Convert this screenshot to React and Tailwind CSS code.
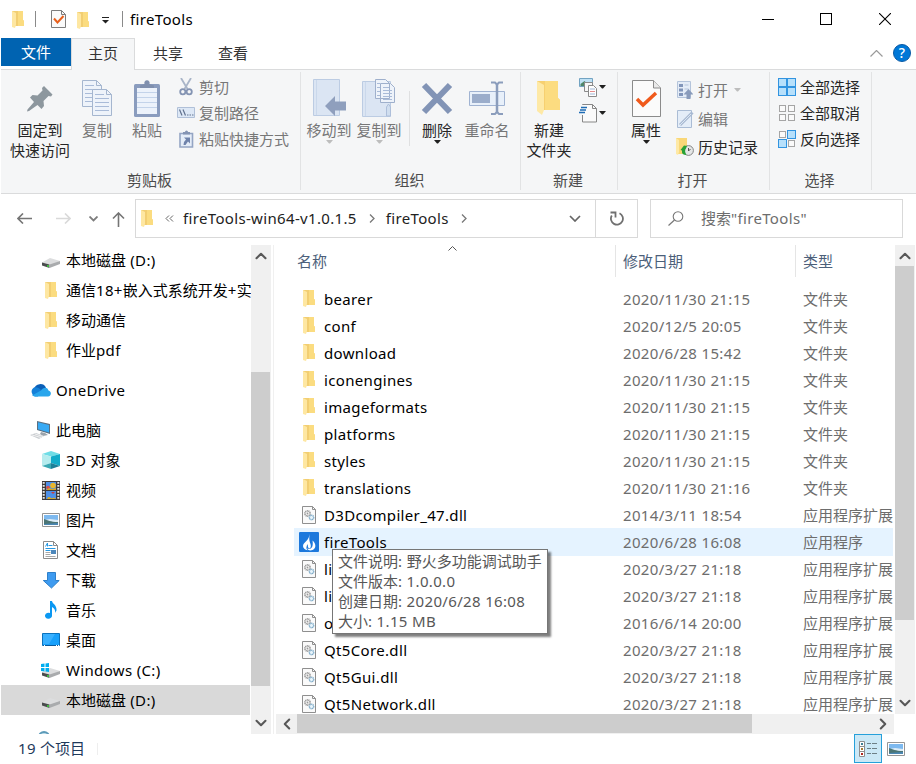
import { ChevronDown, ChevronLeft, ChevronRight, ChevronUp } from "lucide-react";

// latin runs are spaced a little wider than the chinese ones
const Text = ({ children, className = "" }) => (
  <span className={`whitespace-pre ${className}`}>
    {children.split(/([\x20-\x7e]+)/).map((part, i) =>
      i % 2 ? (
        <span key={i} className="tracking-[0.34px]">
          {part}
        </span>
      ) : (
        part
      )
    )}
  </span>
);

const Svg = ({ w, h, children, className = "" }) => (
  <svg width={w} height={h} viewBox={`0 0 ${w} ${h}`} fill="none" className={`shrink-0 ${className}`}>
    {children}
  </svg>
);

const FolderIcon = () => (
  <Svg w={12} h={17}>
    <path d="M0 0h11v9l1 1v5H0z" fill="#f2ce72" />
    <path d="M6 0h5v9l1 1v5H6z" fill="#fbdc80" />
    <path d="M0 0l4 2v12l-1 3-3-1z" fill="#fee7a2" />
  </Svg>
);

const CheckDocIcon = () => (
  <Svg w={15} h={18}>
    <path d="M.5.5h10l4 4v13H.5z" fill="#fafafa" stroke="#7d7d7d" />
    <path d="M10.500.5v4h4" stroke="#7d7d7d" />
    <path d="M3 8.500l3.500 4L12.500 6" stroke="#e8601c" strokeWidth="2" />
  </Svg>
);

const BigFolderIcon = () => (
  <Svg w={26} h={36}>
    <path d="M1 1h21v17l2 2v10H1z" fill="#f7d070" />
    <path d="M9 1h13v17l2 2v10H9z" fill="#fcdc80" />
    <path d="M1 1l7 4v25l-2 5-5-4z" fill="#fee9a6" />
  </Svg>
);

const PinIcon = () => (
  <Svg w={26} h={27}>
    <path d="M17 1l8.500 8.500-1.500 2-2.500-.5-5 5 .5 5-2.500 3-4-4L2 26l-2 .5.5-2 6.500-7.500-4-4.500L5.500 10l5 .5 5-5L15 3z" fill="#8d979e" />
  </Svg>
);

const Sheet = ({ x, y }) => (
  <g transform={`translate(${x} ${y})`}>
    <path d="M.5.5h14l5 5v21H.5z" fill="#eef3fa" stroke="#a5b6cf" />
    <path d="M14.500.5v5h5" stroke="#a5b6cf" />
    <path d="M3 5.500h9M3 9.500h14M3 13.500h14M3 17.500h14M3 21.500h14" stroke="#a9bbd8" />
  </g>
);

const CopyIcon = () => (
  <Svg w={31} h={37}>
    <Sheet x={0} y={0} />
    <Sheet x={10} y={9} />
  </Svg>
);

const PasteIcon = () => (
  <Svg w={26} h={37}>
    <rect x="0" y="4" width="26" height="33" rx="1.500" fill="#8a9cbe" />
    <path d="M3 8h20v26H3z" fill="#ecf2fb" />
    <path d="M3 12.500h20M3 17.500h20M3 22.500h20M3 27.500h20" stroke="#c3d3ea" />
    <path d="M6 8V5.500l4.500-1.500a2.700 2.700 0 115 0L20 5.500V8z" fill="#7f8fae" />
  </Svg>
);

const MoveIcon = () => (
  <Svg w={33} h={38}>
    <path d="M.5.5h26v36H.5z" fill="#dbe5f3" stroke="#bccce3" />
    <path d="M3.500 1v35" stroke="#cad8eb" />
    <path d="M12 27l10-10v5.500h11v9H22V37z" fill="#8f9fbd" />
  </Svg>
);

const CopyToIcon = () => (
  <Svg w={34} h={38}>
    <path d="M.5 2.500h28v35H.5z" fill="#dbe5f3" stroke="#bccce3" />
    <path d="M3.500 3v34" stroke="#cad8eb" />
    <path d="M24.500 37V28l2-3 2 3v9z" fill="#d0deef" stroke="#aebfda" />
    <path d="M13.500.5h10l4 4v15h-14zM18.500 4.500h10l4 4v15h-14z" fill="#eef3fa" stroke="#9fb0cc" />
    <path d="M15 4.500h3M15 8.500h3M15 12.500h3M15 16.500h3M21 8.500h6M21 11.500h9M21 14.500h9M21 17.500h9M21 20.500h9" stroke="#a9bbd8" />
  </Svg>
);

const DeleteIcon = () => (
  <Svg w={32} h={34}>
    <path d="M3 4l26 27M29 4L3 31" stroke="#8294b6" strokeWidth="6" />
  </Svg>
);

const RenameIcon = () => (
  <Svg w={36} h={34}>
    <path d="M.5 10.500h35v14H.5z" fill="#e8f0fa" stroke="#a0b3d2" />
    <path d="M3 13h18v9H3z" fill="#9badcb" />
    <path d="M22 1.500h4l2 2 2-2h4M22 33h4l2-2 2 2h4" stroke="#8b9dbc" strokeWidth="2" />
    <path d="M28 3v29" stroke="#8b9dbc" strokeWidth="2.500" />
  </Svg>
);

const PropertiesIcon = () => (
  <Svg w={29} h={37}>
    <path d="M.5.5h21l7 7.500v28.500H.5z" fill="#fbfbfb" stroke="#8b8b8b" />
    <path d="M21.500.5V8h7" fill="#e9e9e9" stroke="#8b8b8b" />
    <path d="M5 19l6 6L24 13" stroke="#f05a1c" strokeWidth="3.500" />
  </Svg>
);

const CutIcon = () => (
  <Svg w={14} h={18}>
    <path d="M2 0l6.500 11M12 0L5.500 11" stroke="#a9b5c8" strokeWidth="1.800" />
    <circle cx="3.800" cy="13.800" r="2.600" stroke="#8494b3" strokeWidth="1.800" />
    <circle cx="10.200" cy="13.800" r="2.600" stroke="#8494b3" strokeWidth="1.800" />
  </Svg>
);

const CopyPathIcon = () => (
  <Svg w={18} h={12}>
    <path d="M.5.5h17v10H.5z" fill="#dde8f6" stroke="#b0c0d8" />
    <path d="M2.500 2.500l2.500 6M6 2.500l2.500 6M10 8h1.500M12.500 8H14M15 8h1.500" stroke="#62738f" strokeWidth="1.200" />
  </Svg>
);

const PasteLinkIcon = () => (
  <Svg w={15} h={18}>
    <path d="M1 3.500h12.500v13.500H1z" fill="#e5edf8" stroke="#94a5c4" strokeWidth="1.600" />
    <path d="M4 4.500V2h2a1.500 1.500 0 013 0h2v2.500z" fill="#8494b3" />
    <path d="M5 7.500h6v6l-2-2-2.500 3.500H4.500l.5-3 2-2.500z" fill="#6f83ab" />
  </Svg>
);

const NewItemIcon = () => (
  <Svg w={18} h={19}>
    <path d="M.5.500h13v8H.5z" fill="#bfe1f5" stroke="#72a3c2" />
    <path d="M1.500 6l4-3 3 3v2h-7z" fill="#4f8668" />
    <path d="M5.500 4.500h8v9h-8z" fill="#f7f7f7" stroke="#8a8a8a" />
    <path d="M9.500 7.500h5l3 3v8h-8z" fill="#fff" stroke="#8a8a8a" />
    <path d="M11 11h5M11 16h5" stroke="#9fb6d6" />
    <path d="M11 13.500h5" stroke="#e58c8c" />
  </Svg>
);

const EasyAccessIcon = () => (
  <Svg w={18} h={19}>
    <path d="M3.500.5h10l4 4v14h-14z" fill="#fafafa" />
    <path d="M3.500 1V.5h10l4 4v13.500h-14V11M13.500.5v4h4" stroke="#868686" />
    <path d="M2 3.500h6M1 6h6M0 8.500h6" stroke="#1f6cb5" strokeWidth="1.300" />
  </Svg>
);

const OpenIcon = () => (
  <Svg w={16} h={18}>
    <path d="M.5.5h13v16H.5z" fill="#e4ecf7" stroke="#b4c4db" />
    <path d="M2 3h4v3H2zM2 7.500h4v3H2zM2 12h4v3H2z" fill="#8296ba" />
    <path d="M7.500 4h4M7.500 8h4" stroke="#b4c4db" />
    <path d="M11.500 8l5 5.500h-3V18h-4v-4.500h-3z" fill="#899bbb" />
  </Svg>
);

const EditIcon = () => (
  <Svg w={17} h={18}>
    <path d="M.5.5h14v17H.5z" fill="#e4edf8" stroke="#aabcd5" />
    <path d="M3 15L15.500 2.500" stroke="#a8bad3" strokeWidth="3" />
    <path d="M3 15L14 4" stroke="#dce6f2" />
  </Svg>
);

const HistoryIcon = () => (
  <Svg w={18} h={18}>
    <path d="M0 0h11v16H0z" fill="#f9d778" />
    <path d="M0 0l3 2v12l-1 3-2-1z" fill="#fee9a6" />
    <circle cx="12.500" cy="12.500" r="4.900" fill="#e4e6e6" stroke="#858585" />
    <path d="M12.500 10v3l2-2" stroke="#555" />
    <path d="M4.500 12l3.500-4.500 3 .5-1 2.500c-1.500 1.500-1 4.500.5 6.500-3.500 0-5-1.500-4.500-4.500z" fill="#28a136" />
  </Svg>
);

const boxes = [
  [0.5, 0.5],
  [9.5, 0.5],
  [0.5, 9.5],
  [9.5, 9.5],
];

const SelectIcon = ({ on }) => (
  <Svg w={18} h={18}>
    {boxes.map(([x, y], i) =>
      on.includes(i) ? (
        <rect key={i} x={x} y={y} width="8" height="8" fill="#b7e0fb" stroke="#3294e0" />
      ) : (
        <rect key={i} x={x + 1} y={y + 1} width="6" height="6" fill="#fafafa" stroke="#a5a5a5" />
      )
    )}
  </Svg>
);

const DriveIcon = ({ windows }) => (
  <Svg w={19} h={15}>
    <path d="M1 9.500l8-4.500 10 3-9 4z" fill="#dcddde" />
    <path d="M1 9.500l7.500 2V15L1 12.500z" fill="#4a4c4e" />
    <path d="M8.500 11.500L19 8v3l-10.500 4z" fill="#a9abad" />
    <circle cx="7" cy="13" r="1" fill="#41d83e" />
    {windows && <path d="M0 1l3.500-.5v3.500H0zM4.500.400L8 0v4H4.500zM0 5h3.500v3.500L0 8zM4.500 5H8v4l-3.500-.4z" fill="#00adef" />}
  </Svg>
);

const OneDriveIcon = () => (
  <Svg w={21} h={14}>
    <path d="M4 6a6.500 6.500 0 0112-1.500L12 9z" fill="#0a5fb8" />
    <path d="M5 13.500A5 5 0 014 4.500c3-.5 5 .5 7 2.500l-3 6.500z" fill="#1580d8" />
    <path d="M11 7.500c2-3 6-4 7.500 0 3.500 1 3 6-.5 6H4.500L2 12.500z" fill="#29a6ec" />
  </Svg>
);

const PcIcon = () => (
  <Svg w={21} h={18}>
    <path d="M7 0l13 3v10L7 9z" fill="#5b6f80" />
    <path d="M8 1.300l11 2.600v7.700L8 8.200z" fill="#36a9f4" />
    <path d="M11 11l4 1 3 2-5 1-3-2z" fill="#9aa3ab" />
    <path d="M0 14l6-2 8 3-5 3z" fill="#c9cdd1" />
    <path d="M2 14l9 2.500M5 13l8 2.500" stroke="#f2f2f2" />
  </Svg>
);

const CubeIcon = () => (
  <Svg w={18} h={18}>
    <path d="M9 0l9 3-9 2.500L0 3z" fill="#6fdde6" />
    <path d="M0 3l9 2.500V12l-9 3z" fill="#b5ecee" />
    <path d="M9 5.500L18 3v12l-9-3z" fill="#12acc9" />
    <path d="M0 15l9-3v6z" fill="#3aa9b4" />
    <path d="M18 15l-9-3v6z" fill="#1c7f97" />
  </Svg>
);

const VideoIcon = () => (
  <Svg w={18} h={19}>
    <path d="M0 0h18v19H0z" fill="#3e3a3a" />
    <path d="M4 1h10v8H4zM4 10h10v8H4z" fill="#4d8fe8" />
    <path d="M1.700 1v17M16.300 1v17" stroke="#e8e8e8" strokeWidth="2" strokeDasharray="1.800 1.200" />
    <circle cx="11" cy="4.500" r="2.800" fill="#e8b62d" />
    <circle cx="6" cy="6.500" r="1.800" fill="#d94d4d" />
    <path d="M4 9l3-2 4 1 3-1v2zM5 18c1-3 3-2 4-1s3-2 5 1z" fill="#d5a928" />
    <path d="M9 11l2 2 2-2z" fill="#c64040" />
  </Svg>
);

const PictureIcon = () => (
  <Svg w={18} h={14}>
    <path d="M.5.500h17v13H.5z" fill="#fff" stroke="#959595" />
    <path d="M2 2h14v10H2z" fill="#7db9ef" />
    <path d="M2 7l6-1 8 1v2H2z" fill="#dcecf7" />
    <path d="M2 6c4 1 6 3 14 3v3H2z" fill="#4c7574" />
    <path d="M2 11l14-1v2H2z" fill="#4b87b3" />
  </Svg>
);

const DocsIcon = () => (
  <Svg w={15} h={18}>
    <path d="M.5.5h10l4 4v13H.5z" fill="#fff" stroke="#8b8b8b" />
    <path d="M10.500.5v4h4" stroke="#8b8b8b" />
    <path d="M2.500 5.500L4.500 2v3.500M5.500 4.500h4M2.500 7.500h10M2.500 9.500h5" stroke="#2497e3" />
    <path d="M2.500 11.500h5M2.500 13.500h5M2.500 15.500h10" stroke="#a8a8a8" />
    <path d="M8 9h5v4H8z" fill="#4d87bb" />
  </Svg>
);

const DownloadIcon = () => (
  <Svg w={18} h={17}>
    <path d="M5.500.5h8v8h3.700L9.500 16 1.300 8.500h4.200z" fill="#3e9bf0" stroke="#2e80ca" />
  </Svg>
);

const MusicIcon = () => (
  <Svg w={12} h={18}>
    <path d="M5 0h2c.5 3 5 4 4.500 9.500L10 12c.5-3-.5-4.500-3-6v8.500a3.500 3 0 11-2-2.500z" fill="#0b98f2" />
  </Svg>
);

const DesktopIcon = () => (
  <Svg w={18} h={14}>
    <path d="M.5.5h17v12H.5z" fill="#18a0fb" stroke="#0b72bd" />
    <path d="M1 1h12L7 11H1z" fill="#39b0ff" />
    <path d="M1 12.500h16" stroke="#0a5a9c" />
    <path d="M2 12.500h1M14 12.500h1M16 12.500h1" stroke="#fff" />
  </Svg>
);

const DllIcon = () => (
  <Svg w={14} h={18}>
    <path d="M.5.5h10l3 3v14H.5z" fill="#fafafa" stroke="#8f8f8f" />
    <path d="M10.500.5v3h3" stroke="#8f8f8f" />
    <circle cx="5.500" cy="7.500" r="2.600" stroke="#979797" strokeWidth="1.600" strokeDasharray="1.100 .5" />
    <circle cx="5.500" cy="7.500" r=".9" fill="#999" />
    <circle cx="9.500" cy="11.500" r="2.200" fill="#e8f4fb" stroke="#7fabc8" strokeWidth="1.400" strokeDasharray="1.100 .4" />
  </Svg>
);

const FireIcon = () => (
  <Svg w={20} h={20}>
    <rect width="20" height="20" rx="1" fill="#1c78dc" />
    <path d="M10.800 2c-1 3-.8 4-3 6.500-2 2.200-3.800 3.500-3.800 5.500 0 2.200 2 3.800 4.500 4.300C7 16.500 7 14.500 8.800 12c.2 2-.3 3.500 1.200 4.300 1.800.2 2.200-1.800 1.500-4.300-1-2.500-1.800-5-.7-10z" fill="#fff" />
    <path d="M13.500 8.500c4 3.500 4 8.500-1 9.800-2 .4-3.500-.3-4.500-1.800 5 1.500 6.500-2.500 5.500-8z" fill="#fff" />
  </Svg>
);

const DetailsIcon = () => (
  <Svg w={18} h={16}>
    <path d="M.5.5h5v15h-5zM.5 5.500h5M.5 10.500h5" fill="#fff" stroke="#8e8e8e" />
    <path d="M2 2h2v2H2z" fill="#3d7f95" />
    <path d="M2 7h2v2H2z" fill="#a97e36" />
    <path d="M2 12h2v2H2z" fill="#b3261e" />
    <path d="M8 2.500h4M13 2.500h5M8 7.500h4M13 7.500h5M8 12.500h4M13 12.500h5" stroke="#6d7f86" />
  </Svg>
);

const Triangle = ({ color = "#1f1f1f" }) => (
  <Svg w={7} h={4}>
    <path d="M0 0h7L4 3.500H3z" fill={color} />
  </Svg>
);

const BigButton = ({ icon, lines, arrow, arrowColor, className }) => (
  <div className={`flex shrink-0 flex-col items-center ${className}`}>
    <div className="flex h-11 items-center justify-center">{icon}</div>
    {lines.map((line) => (
      <div key={line} className="h-5 leading-5 whitespace-nowrap">
        {line}
      </div>
    ))}
    {arrow && <Triangle color={arrowColor} />}
  </div>
);

const SmallButton = ({ icon, label, arrow, className = "h-[26px]" }) => (
  <div className={`flex items-center ${className}`}>
    <div className="mr-1 flex w-[18px] justify-center">{icon}</div>
    <span className="whitespace-nowrap">{label}</span>
    {arrow && (
      <div className="ml-[6px]">
        <Triangle color="#bdbdbd" />
      </div>
    )}
  </div>
);

const Group = ({ title, className, children }) => (
  <div className={`relative flex shrink-0 flex-col ${className}`}>
    <div className="flex h-[98px] pt-[6px]">{children}</div>
    <div className="pr-[3px] text-center leading-[24px] text-[#4c4c4c]">{title}</div>
    <div className="absolute top-0.5 right-0 h-[118px] w-px bg-[#e2e3e4]" />
  </div>
);

const Ribbon = () => (
  <div className="ml-px flex h-[124px] border-b border-[#dadbdc] bg-[#f5f6f7] text-[#262626]">
    <Group title="剪贴板" className="w-[300px]">
      <BigButton icon={<PinIcon />} lines={["固定到", "快速访问"]} className="ml-[9px] w-[60px]" />
      <BigButton icon={<CopyIcon />} lines={["复制"]} className="w-[54px] text-[#777]" />
      <BigButton icon={<PasteIcon />} lines={["粘贴"]} className="w-[46px] text-[#777]" />
      <div className="-mt-0.5 ml-[7px] text-[#777]">
        <SmallButton icon={<CutIcon />} label="剪切" />
        <SmallButton icon={<CopyPathIcon />} label="复制路径" />
        <SmallButton icon={<PasteLinkIcon />} label="粘贴快捷方式" />
      </div>
    </Group>
    <Group title="组织" className="w-[220px]">
      <BigButton icon={<MoveIcon />} lines={["移动到"]} arrow arrowColor="#bdbdbd" className="ml-[3px] w-[50px] text-[#777]" />
      <BigButton icon={<CopyToIcon />} lines={["复制到"]} arrow arrowColor="#bdbdbd" className="w-[50px] text-[#777]" />
      <div className="mt-[15px] mr-[3px] ml-[5px] h-[55px] w-px bg-[#dfe0e1]" />
      <BigButton icon={<DeleteIcon />} lines={["删除"]} arrow className="w-12" />
      <BigButton icon={<RenameIcon />} lines={["重命名"]} className="w-[52px] text-[#777]" />
    </Group>
    <Group title="新建" className="w-[97px]">
      <BigButton icon={<BigFolderIcon />} lines={["新建", "文件夹"]} className="w-14" />
      <div className="-mt-0.5 ml-0.5">
        <div className="flex h-[26px] items-center gap-[2px]">
          <NewItemIcon />
          <Triangle />
        </div>
        <div className="flex h-[26px] items-center gap-[2px]">
          <EasyAccessIcon />
          <Triangle />
        </div>
      </div>
    </Group>
    <Group title="打开" className="w-[152px]">
      <BigButton icon={<PropertiesIcon />} lines={["属性"]} arrow className="w-14" />
      <div className="-mt-px ml-[2px] text-[#777]">
        <SmallButton icon={<OpenIcon />} label="打开" arrow className="h-[29px]" />
        <SmallButton icon={<EditIcon />} label="编辑" className="h-[29px]" />
        <SmallButton icon={<HistoryIcon />} label="历史记录" className="h-[28px] text-[#262626]" />
      </div>
    </Group>
    <Group title="选择" className="w-[102px]">
      <div className="-mt-0.5 ml-2">
        <SmallButton icon={<SelectIcon on={[0, 1, 2, 3]} />} label="全部选择" />
        <SmallButton icon={<SelectIcon on={[]} />} label="全部取消" />
        <SmallButton icon={<SelectIcon on={[1, 2]} />} label="反向选择" />
      </div>
    </Group>
  </div>
);

const TitleBar = () => (
  <div className="flex h-[38px] items-center pl-3">
    <FolderIcon />
    <div className="ml-[11px] h-4 w-px bg-[#8a8a8a]" />
    <div className="ml-[15px]">
      <CheckDocIcon />
    </div>
    <div className="mt-0.5 ml-[11px]">
      <FolderIcon />
    </div>
    <Svg w={7} h={7} className="mt-0.5 ml-[13px]">
      <path d="M0 .5h7" stroke="#222" />
      <path d="M0 3h7L3.500 6.500z" fill="#222" />
    </Svg>
    <div className="ml-[13px] h-4 w-px bg-[#8a8a8a]" />
    <Text className="ml-[7px] text-black">fireTools</Text>
    <div className="mr-[25px] ml-auto flex items-center gap-[47px]">
      <div className="-mr-px h-px w-3 bg-black" />
      <div className="h-3 w-3 border border-black" />
      <Svg w={12} h={12}>
        <path d="M0 0l12 12M12 0L0 12" stroke="#000" strokeWidth="1.100" />
      </Svg>
    </div>
  </div>
);

const Tabs = () => (
  <div className="ml-px flex h-8 border-b border-[#dadbdc] leading-[28px] text-[#333]">
    <div className="h-7 w-[70px] bg-[#0063b1] text-center leading-[29px] text-white">文件</div>
    <div className="h-8 w-16 border border-b-0 border-[#dadbdc] bg-[#f5f6f7] text-center">主页</div>
    <div className="ml-px w-16 text-center leading-[30px]">共享</div>
    <div className="w-[66px] text-center leading-[30px]">查看</div>
    <div className="mr-[5px] ml-auto flex items-center gap-2.5 pb-px">
      <Svg w={13} h={7}>
        <path d="M.5 6.500l6-6 6 6" stroke="#9a9a9a" strokeWidth="1.200" />
      </Svg>
      <div className="h-[18px] w-[18px] rounded-full border border-[#0a5aa5] bg-[#0078d7] text-center text-[14px] leading-4 font-medium text-white">?</div>
    </div>
  </div>
);

const AddressBar = () => (
  <div className="flex h-[51px] items-center pb-0.5 text-[#222]">
    <div className="flex w-[135px] shrink-0 items-center">
      <Svg w={15} h={11} className="ml-[17px]">
        <path d="M15 5.500H1M6 .5l-5 5 5 5" stroke="#757575" strokeWidth="1.600" />
      </Svg>
      <Svg w={15} h={11} className="ml-[24px]">
        <path d="M0 5.500h14M9 .5l5 5-5 5" stroke="#d9d9d9" strokeWidth="1.600" />
      </Svg>
      <Svg w={9} h={6} className="ml-[18px]">
        <path d="M.5.5l4 4 4-4" stroke="#7d7d7d" strokeWidth="1.800" />
      </Svg>
      <Svg w={13} h={15} className="mt-0.5 ml-[14px]">
        <path d="M6.500 15V1M1 6.500l5.500-5.500L12 6.500" stroke="#757575" strokeWidth="1.600" />
      </Svg>
    </div>
    <div className="flex h-[39px] w-[503px] shrink-0 items-center border border-[#d9d9d9]">
      <div className="ml-[5px]">
        <FolderIcon />
      </div>
      <Svg w={9} h={7} className="ml-3">
        <path d="M4 .5l-3 3 3 3M8 .5l-3 3 3 3" stroke="#666" />
      </Svg>
      <Text className="-mt-px ml-[9px]">fireTools-win64-v1.0.1.5</Text>
      <Svg w={6} h={9} className="ml-[12px]">
        <path d="M1 .5l4 4-4 4" stroke="#777" strokeWidth="1.300" />
      </Svg>
      <Text className="-mt-px ml-[11px]">fireTools</Text>
      <Svg w={6} h={9} className="ml-[12px]">
        <path d="M1 .5l4 4-4 4" stroke="#777" strokeWidth="1.300" />
      </Svg>
      <Svg w={12} h={7} className="mr-[14px] ml-auto">
        <path d="M1 1l5 5 5-5" stroke="#666" strokeWidth="1.700" />
      </Svg>
      <div className="flex h-full w-[42px] items-center justify-center border-l border-[#d9d9d9]">
        <Svg w={15} h={15}>
          <path d="M10.500 2.200A6 6 0 112.800 4.500M1.500 1.500h5v5" stroke="#707070" strokeWidth="1.800" />
        </Svg>
      </div>
    </div>
    <div className="ml-3 flex h-[39px] w-[253px] items-center border border-[#d9d9d9] pl-[17px] text-[#6d6d6d]">
      <Svg w={16} h={15}>
        <circle cx="10" cy="5.500" r="4.800" stroke="#777" strokeWidth="1.100" />
        <path d="M6.500 9L.5 14.500" stroke="#777" strokeWidth="1.200" />
      </Svg>
      <Text className="-mt-px ml-[17px]">搜索"fireTools"</Text>
    </div>
  </div>
);

const tree = [
  { icon: <DriveIcon />, name: "本地磁盘 (D:)" },
  { icon: <FolderIcon />, name: "通信18+嵌入式系统开发+实" },
  { icon: <FolderIcon />, name: "移动通信" },
  { icon: <FolderIcon />, name: "作业pdf", className: "mb-2.5" },
  { icon: <OneDriveIcon />, name: "OneDrive", root: true, className: "mb-2.5" },
  { icon: <PcIcon />, name: "此电脑", root: true },
  { icon: <CubeIcon />, name: "3D 对象" },
  { icon: <VideoIcon />, name: "视频" },
  { icon: <PictureIcon />, name: "图片" },
  { icon: <DocsIcon />, name: "文档" },
  { icon: <DownloadIcon />, name: "下载" },
  { icon: <MusicIcon />, name: "音乐" },
  { icon: <DesktopIcon />, name: "桌面" },
  { icon: <DriveIcon windows />, name: "Windows (C:)" },
  { icon: <DriveIcon />, name: "本地磁盘 (D:)", selected: true },
];

const Sidebar = () => (
  <div className="ml-px h-full w-[250px] shrink-0 overflow-hidden text-black">
    {tree.map((item, i) => (
      <div
        key={i}
        className={`flex h-[30px] items-center ${item.root ? "pl-[29px]" : "pl-10"} ${item.selected ? "w-[249px] bg-[#d9d9d9]" : ""} ${item.className || ""}`}
      >
        <div className={`flex shrink-0 justify-center ${item.root ? "mr-[5px] w-[21px]" : "mr-[6px] w-[19px]"}`}>{item.icon}</div>
        <Text>{item.name}</Text>
      </div>
    ))}
    <div className="mt-4 ml-[37px] h-5 w-3 rounded-full border-2 border-[#5c9ab8] bg-[#bcdcea]" />
  </div>
);

const chevron = { size: 18, strokeWidth: 2.8, color: "#585858", className: "shrink-0" };

const files = [
  { name: "bearer", date: "2020/11/30 21:15", type: "文件夹" },
  { name: "conf", date: "2020/12/5 20:05", type: "文件夹" },
  { name: "download", date: "2020/6/28 15:42", type: "文件夹" },
  { name: "iconengines", date: "2020/11/30 21:15", type: "文件夹" },
  { name: "imageformats", date: "2020/11/30 21:15", type: "文件夹" },
  { name: "platforms", date: "2020/11/30 21:15", type: "文件夹" },
  { name: "styles", date: "2020/11/30 21:15", type: "文件夹" },
  { name: "translations", date: "2020/11/30 21:16", type: "文件夹" },
  { name: "D3Dcompiler_47.dll", date: "2014/3/11 18:54", type: "应用程序扩展" },
  { name: "fireTools", date: "2020/6/28 16:08", type: "应用程序" },
  { name: "li", date: "2020/3/27 21:18", type: "应用程序扩展" },
  { name: "li", date: "2020/3/27 21:18", type: "应用程序扩展" },
  { name: "o", date: "2016/6/14 20:00", type: "应用程序扩展" },
  { name: "Qt5Core.dll", date: "2020/3/27 21:18", type: "应用程序扩展" },
  { name: "Qt5Gui.dll", date: "2020/3/27 21:18", type: "应用程序扩展" },
  { name: "Qt5Network.dll", date: "2020/3/27 21:18", type: "应用程序扩展" },
];

const fileIcon = (file) => {
  if (file.type === "文件夹") return <FolderIcon />;
  if (file.type === "应用程序") return <FireIcon />;
  return <DllIcon />;
};

const Tooltip = () => (
  <div className="absolute top-[304px] left-[58px] h-[85px] w-[216px] border border-[#767676] bg-white pt-px pl-[5px] leading-5 text-[#575757] shadow-[3px_3px_2px_rgba(0,0,0,0.5)]">
    <Text className="block">文件说明: 野火多功能调试助手</Text>
    <Text className="block">文件版本: 1.0.0.0</Text>
    <Text className="block">创建日期: 2020/6/28 16:08</Text>
    <Text className="block">大小: 1.15 MB</Text>
  </div>
);

const FileList = () => (
  <div className="relative h-[469px] w-[619px] shrink-0 overflow-hidden">
    <div className="mb-[9px] flex h-8 items-center text-[#4c607a]">
      <div className="flex h-full w-[342px] items-center border-r border-[#e5e5e5] pl-[23px]">名称</div>
      <div className="flex h-full w-[180px] items-center border-r border-[#e5e5e5] pl-[7px]">修改日期</div>
      <div className="pl-[7px]">类型</div>
    </div>
    <Svg w={9} h={5} className="absolute top-px left-[174px]">
      <path d="M.5 4.500l4-4 4 4" stroke="#555" />
    </Svg>
    {files.map((file, i) => (
      <div
        key={i}
        className={`ml-5 flex h-[27px] items-center pb-0.5 text-[#6d6d6d] ${file.name === "fireTools" ? "bg-[#e5f3ff] shadow-[0_-1px_0_#e5f3ff]" : ""}`}
      >
        <div className="mr-[5px] ml-[5px] flex w-5 justify-center">{fileIcon(file)}</div>
        <Text className="w-[299px] text-black">{file.name}</Text>
        <Text className="w-[180px]">{file.date}</Text>
        <Text>{file.type}</Text>
      </div>
    ))}
    <Tooltip />
  </div>
);

const App = () => {
  return (
    <div className="h-[764px] w-[916px] overflow-hidden bg-white font-['Noto_Sans','Noto_Sans_CJK_SC',sans-serif] text-[15px] leading-5">
      <TitleBar />
      <Tabs />
      <Ribbon />
      <AddressBar />
      <div className="flex h-[489px]">
        <Sidebar />
        <div className="flex w-5 shrink-0 flex-col items-center bg-[#f0f0f0] py-0.5 pr-px">
          <ChevronUp {...chevron} />
          <div className="mt-[107px] h-[314px] w-[19px] bg-[#cdcdcd]" />
          <div className="mt-auto">
            <ChevronDown {...chevron} />
          </div>
        </div>
        <div className="mr-px ml-0.5 w-px bg-[#f0f0f0]" />
        <div className="flex w-[641px] flex-col">
          <div className="flex h-[469px]">
            <div className="-ml-px">
              <FileList />
            </div>
            <div className="ml-[2px] flex w-5 shrink-0 flex-col items-center bg-[#f0f0f0] py-0.5 pr-px">
              <ChevronUp {...chevron} />
              <div className="mt-px h-[354px] w-[19px] bg-[#cdcdcd]" />
              <div className="mt-auto">
                <ChevronDown {...chevron} />
              </div>
            </div>
          </div>
          <div className="ml-px flex h-5 w-[618px] items-center bg-[#f0f0f0] px-0.5 pb-px">
            <ChevronLeft {...chevron} />
            <div className="ml-px h-[19px] w-[455px] bg-[#cdcdcd]" />
            <div className="ml-auto">
              <ChevronRight {...chevron} />
            </div>
          </div>
        </div>
      </div>
      <div className="flex h-[30px] items-center pl-[18px] text-[#1e395b]">
        <Text className="w-[79px] pb-0.5">19 个项目</Text>
        <div className="h-3 w-px bg-[#eee]" />
        <div className="mr-[5px] mb-px ml-auto flex h-[29px] w-7 items-center justify-center border border-[#26a0da] bg-[#cbe8f6]">
          <DetailsIcon />
        </div>
        <div className="mr-[11px]">
          <PictureIcon />
        </div>
      </div>
    </div>
  );
};

export default App;
